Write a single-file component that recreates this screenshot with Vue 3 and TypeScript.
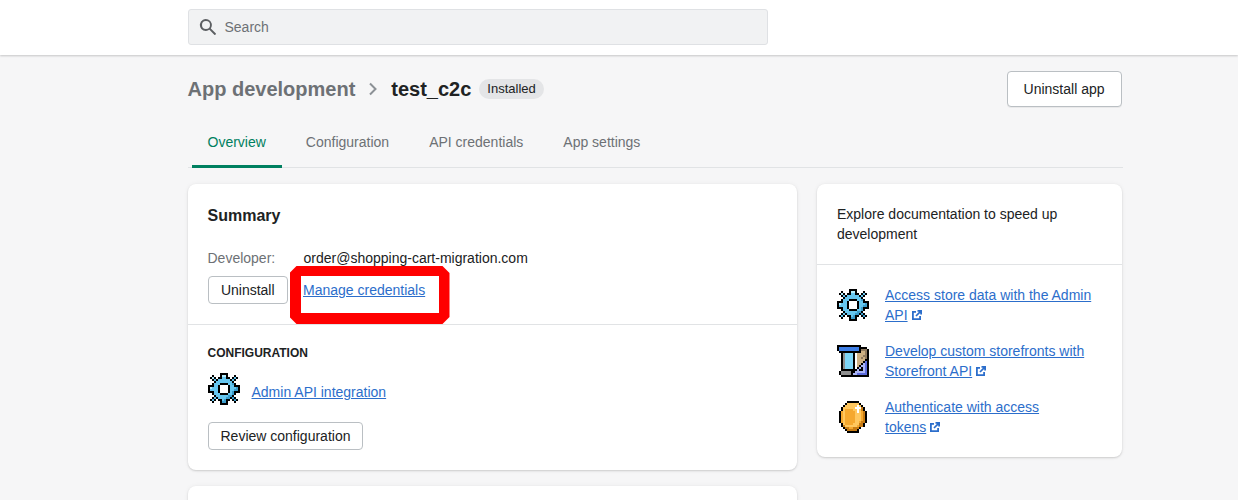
<script setup lang="ts">
type Pal = Record<string, string>
const pal: Pal = {
  k: '#000000', b: '#66c6ef', l: '#b4ecfc', d: '#3a9ccc', w: '#ffffff', g: '#8e8e8e',
  c: '#7ed6f8', B: '#3f7fe6', n: '#cdb083', t: '#8f7a5e', v: '#aab4f4', V: '#5c6cdc',
  o: '#f5a82e', y: '#ffc75e', O: '#c87c14', s: '#e8e8e8',
}
const gear = [
  '......kkkk......',
  '..k...kllk...k..',
  '.klk.kkbbkk.kbk.',
  '..kbkbbbbbbkbk..',
  '...kbbbbbbbbk...',
  '..kbbbkkkkbbdk..',
  'kkkbbk....kbbkkk',
  'klbbbk....kbbbdk',
  'kbbbbk....kbbddk',
  'kkkbbk....kbdkkk',
  '..kbbbkkkkbbdk..',
  '...kbbbbbbddk...',
  '..kbkbbbbddkdk..',
  '.kbk.kkbdkk.kdk.',
  '..k...kddk...k..',
  '......kkkk......',
]
const store = [
  'kkkkkkkkkkkk....',
  'kBBBBBBBBBBkkkk.',
  'kBBBBBBBBBBktttk',
  '.kkkkkkkkkkknntk',
  '..kgcccckwnnnntk',
  '..kgcccckwnnnttk',
  '..kgcccckwnntntk',
  '..kgcccckwnnnnkk',
  '..kgcccckwnnnkVk',
  '..kgcccckwnnkvVk',
  '..kgcccckwnkvvVk',
  '..kgcccckwkvkvVk',
  '..kkkkkkkkvkkvVk',
  '.kgggggkkvvvvvVk',
  '.kgggggkvvVVVVVk',
  '..kkkkkkkkkkkkkk',
]
const coin = [
  '.....kkkkkk.....',
  '....kyyyyyyk....',
  '...kyyyyyywyk...',
  '..kyyyyyywwwOk..',
  '..kyooooyywyOk..',
  '.koyoooooywyoOk.',
  '.koyoooooyyyoOk.',
  '.koyoooooyyyoOk.',
  '.koyoooooyyyoOk.',
  '.koyoooooyyyoOk.',
  '.koyoooooyyoOOk.',
  '..kyooooyyyOOk..',
  '..kOyyyyyyoOOk..',
  '...kOOooOOOk....',
  '....kOOOOOk.....',
  '.....kkkkkk.....',
]
function cells(rows: string[]) {
  const out: { x: number; y: number; f: string }[] = []
  rows.forEach((r, y) => [...r].forEach((c, x) => { if (c !== '.') out.push({ x, y, f: pal[c] }) }))
  return out
}
const icons = { gear: cells(gear), store: cells(store), coin: cells(coin) }
const tabs = ['Overview', 'Configuration', 'API credentials', 'App settings']
const docs = [
  { icon: icons.gear, a: 'Access store data with the Admin', b: 'API' },
  { icon: icons.store, a: 'Develop custom storefronts with', b: 'Storefront API' },
  { icon: icons.coin, a: 'Authenticate with access', b: 'tokens' },
]
</script>

<template>
  <div class="page">
    <header class="topbar">
      <div class="search">
        <svg class="search-ic" viewBox="0 0 20 20" width="20" height="20"><path d="M8 12a4 4 0 1 1 0-8 4 4 0 0 1 0 8zm9.700 4.300-4.900-4.900A6 6 0 1 0 8 14a6 6 0 0 0 3.400-1.200l4.900 4.900a1 1 0 0 0 1.400-1.400z" fill="#5c5f62"/></svg>
        <span>Search</span>
      </div>
    </header>
    <main class="wrap">
      <div class="head">
        <div class="crumbs">
          <span class="crumb">App development</span>
          <svg class="chev" viewBox="0 0 20 20" width="20" height="20"><path d="M7 4.500l5.500 5.500L7 15.500" fill="none" stroke="#8c9196" stroke-width="2"/></svg>
          <span class="title">test_c2c</span>
          <span class="badge">Installed</span>
        </div>
        <button class="btn big">Uninstall app</button>
      </div>
      <nav class="tabs">
        <span v-for="(t, i) in tabs" :key="t" class="tab" :class="{ on: i === 0 }">{{ t }}</span>
      </nav>
      <div class="cols">
        <div class="left">
          <section class="card">
            <div class="sec first">
              <h2>Summary</h2>
              <div class="dev"><span class="lbl">Developer:</span><span>order@shopping-cart-migration.com</span></div>
              <div class="acts">
                <button class="btn uninstall">Uninstall</button>
                <a class="link manage">Manage credentials</a>
              </div>
            </div>
            <div class="sec second">
              <h3>CONFIGURATION</h3>
              <div class="integ">
                <svg class="pix" viewBox="0 0 16 16" width="32" height="32" shape-rendering="crispEdges"><rect v-for="(c, i) in icons.gear" :key="i" :x="c.x" :y="c.y" width="1" height="1" :fill="c.f"/></svg>
                <a class="link">Admin API integration</a>
              </div>
              <button class="btn">Review configuration</button>
            </div>
            <div class="mark"></div>
          </section>
          <section class="card stub"></section>
        </div>
        <aside class="card right">
          <div class="explore">Explore documentation to speed up development</div>
          <div class="docs">
            <div v-for="d in docs" :key="d.a" class="doc">
              <svg class="pix" viewBox="0 0 16 16" width="32" height="32" shape-rendering="crispEdges"><rect v-for="(c, i) in d.icon" :key="i" :x="c.x" :y="c.y" width="1" height="1" :fill="c.f"/></svg>
              <div class="doc-t">
                <a class="link">{{ d.a }}</a><br />
                <a class="link">{{ d.b }}</a>
                <svg class="ext" viewBox="0 0 12 12" width="12" height="12"><path d="M1 2h4v1.800H2.800v5.400h5.400V7H10v4H1zM6.500 1H11v4.500H9.200V4L5.600 7.600 4.400 6.400 8 2.800H6.500z" fill="#2c6ecb"/></svg>
              </div>
            </div>
          </div>
        </aside>
      </div>
    </main>
  </div>
</template>

<style>
html, body { margin: 0; background: #f6f6f7; overflow: hidden; }
</style>

<style scoped>
.page { height: 500px; overflow: hidden; background: #f6f6f7; font: 14px/20px "Liberation Sans", Arial, sans-serif; color: #202223; }
.topbar { height: 55px; background: #fff; box-shadow: 0 1px 2px rgba(0,0,0,.2); padding: 9px 0 0 187.5px; box-sizing: border-box; position: relative; }
.search { width: 580.5px; height: 36px; box-sizing: border-box; background: #f1f2f3; border: 1px solid #dfe1e4; border-radius: 3px; display: flex; align-items: center; padding-left: 9px; color: #6d7175; }
.search-ic { margin-right: 7px; }
.wrap { width: 935px; margin-left: 187.5px; }
.head { height: 36px; margin-top: 16px; display: flex; justify-content: space-between; align-items: center; }
.crumbs { display: flex; align-items: center; }
.crumb, .title { font-size: 20px; font-weight: 700; line-height: 28px; }
.crumb { color: #6d7175; }
.chev { margin: 0 8px 0 8px; }
.badge { margin-left: 7.5px; background: #e4e5e7; border-radius: 10px; padding: 0 8.5px; height: 20px; font-size: 13px; line-height: 20px; }
.btn { background: #fff; border: 1px solid #babfc3; border-radius: 4px; font: 14px/20px "Liberation Sans", Arial, sans-serif; color: #202223; padding: 3px 12px; height: 28px; box-sizing: border-box; display: block; }
.btn.big { height: 36px; padding: 7px 16px; margin-right: 1px; box-shadow: 0 1px 0 rgba(0,0,0,.05); }
.btn.uninstall { width: 80.5px; }
.tabs { display: flex; height: 61px; box-sizing: border-box; border-bottom: 1px solid #e1e3e5; padding-left: 4px; align-items: stretch; }
.tab { padding: 25px 16px 0; margin-right: 8px; color: #6d7175; box-sizing: border-box; }
.tab.on { color: #008060; border-bottom: 3px solid #008060; height: 61px; }
.cols { display: flex; gap: 20px; margin-top: 16px; align-items: flex-start; }
.left { width: 609.5px; display: flex; flex-direction: column; gap: 16px; }
.card { background: #fff; border-radius: 8px; box-shadow: 0 0 5px rgba(23,24,24,.05), 0 1px 2px rgba(0,0,0,.15); position: relative; }
.sec.first { height: 141px; box-sizing: border-box; padding: 20px 20px 0; border-bottom: 1px solid #e1e3e5; }
h2 { margin: 0; font-size: 16px; line-height: 24px; font-weight: 700; }
.dev { display: flex; margin-top: 20px; }
.lbl { width: 96px; color: #6d7175; }
.acts { display: flex; margin-top: 8px; align-items: flex-start; }
.link { color: #2c6ecb; text-decoration: underline; }
.manage { margin: 4px 0 0 15px; }
.sec.second { height: 145px; box-sizing: border-box; padding: 18px 20px 0; }
h3 { margin: 0; font-size: 12px; line-height: 20px; font-weight: 700; }
.integ { display: flex; align-items: flex-start; gap: 12px; margin-top: 10px; height: 32px; }
.integ .link { padding-top: 9px; }
.sec.second .btn { margin-top: 17px; }
.mark { position: absolute; left: 102px; top: 82px; width: 138px; height: 37px; border: 11px solid #f00; border-top-width: 10px; clip-path: polygon(7px 0, calc(100% - 7px) 0, 100% 7px, 100% calc(100% - 7px), calc(100% - 7px) 100%, 7px 100%, 0 calc(100% - 7px), 0 7px); }
.stub { height: 100px; }
.right { width: 305px; height: 273px; }
.explore { padding: 20px; height: 81px; box-sizing: border-box; border-bottom: 1px solid #e1e3e5; }
.docs { padding: 20px 20px 0; display: flex; flex-direction: column; gap: 16px; }
.doc { display: flex; gap: 16px; height: 40px; align-items: center; }
.doc-t { line-height: 20px; }
.ext { margin-left: 3px; vertical-align: -1px; }
</style>
